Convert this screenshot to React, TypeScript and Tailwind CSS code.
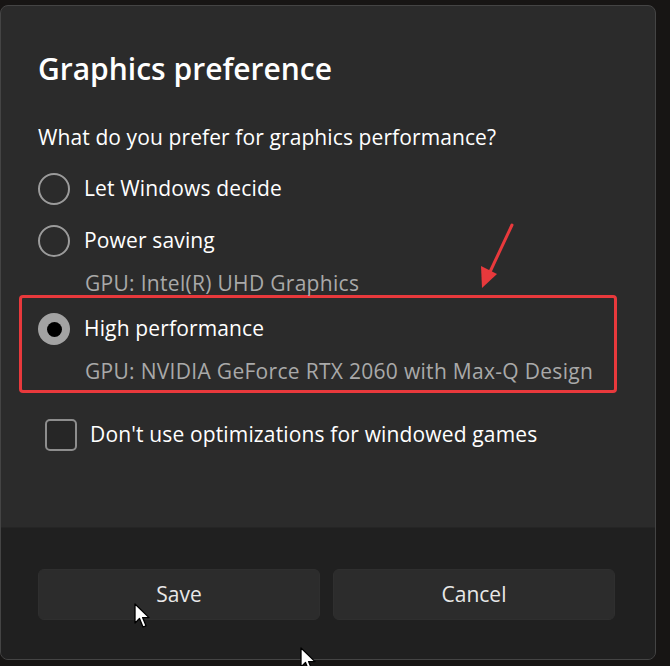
import type { ReactNode } from "react";

const font = { fontFamily: '"Open Sans", "Noto Sans", "Liberation Sans", sans-serif' };

function Radio({ checked = false }: { checked?: boolean }) {
  if (checked) {
    return (
      <span className="flex h-[32px] w-[32px] shrink-0 items-center justify-center rounded-full bg-[#a3a3a3]">
        <span className="h-[15px] w-[15px] rounded-full bg-black" />
      </span>
    );
  }
  return <span className="h-[32px] w-[32px] shrink-0 rounded-full border-2 border-[#9b9b9b]" />;
}

function Option({ label, checked, children }: { label: string; checked?: boolean; children?: ReactNode }) {
  return (
    <div>
      <div className="flex h-[40px] items-center gap-[14px]">
        <Radio checked={checked} />
        <span className="text-[21px] tracking-[0.15px] text-white">{label}</span>
      </div>
      {children}
    </div>
  );
}

function Cursor({ className }: { className: string }) {
  return (
    <svg className={className} width="18" height="26" viewBox="0 0 18 26">
      <path d="M1 1 L1 20 L5.5 15.5 L9 24 L12 22.8 L8.6 14.6 L15 14.6 Z" fill="#fff" stroke="#000" strokeWidth="1.3" strokeLinejoin="round" />
    </svg>
  );
}

export default function App() {
  return (
    <div className="relative h-[666px] w-[670px] overflow-hidden bg-[#171514] pt-[5px]" style={font}>
      <div className="flex h-[655px] w-[656px] flex-col overflow-hidden rounded-[8px] border border-[#444] bg-[#2b2b2b]">
        <div className="pl-[37px] pr-[38px] pt-[45px]">
          <h1 className="h-[36px] text-[30px] font-semibold leading-[36px] text-white">Graphics preference</h1>

          <p className="mt-[36px] h-[28px] text-[21px] leading-[28px] tracking-[0.1px] text-white">
            What do you prefer for graphics performance?
          </p>

          <div className="mt-[18px] flex flex-col gap-[12px]">
            <Option label="Let Windows decide" />
            <Option label="Power saving">
              <p className="ml-[47px] mt-[10px] h-[24px] text-[21px] leading-[24px] tracking-[0.3px] text-[#a9a9a9]">
                GPU: Intel(R) UHD Graphics
              </p>
            </Option>
          </div>

          <div className="ml-[-19px] mt-0 w-[598px] rounded-[4px] border-[3px] border-[#e8393c] pb-[7px] pl-[16px] pt-[11px]">
            <Option label="High performance" checked>
              <p className="ml-[47px] mt-[10px] h-[24px] text-[21px] leading-[24px] tracking-[0.3px] text-[#a9a9a9]">
                GPU: NVIDIA GeForce RTX 2060 with Max-Q Design
              </p>
            </Option>
          </div>

          <div className="mt-[26px] flex h-[32px] items-center gap-[13px] pl-[7px]">
            <span className="h-[32px] w-[32px] shrink-0 rounded-[5px] border-2 border-[#8d8d8d] bg-[#262626]" />
            <span className="text-[21px] tracking-[0.15px] text-white">Don't use optimizations for windowed games</span>
          </div>
        </div>

        <div className="mt-auto flex h-[132px] gap-[13px] border-t border-[#252525] bg-[#202020] pl-[37px] pt-[41px]">
          <button className="h-[51px] w-[282px] rounded-[6px] border border-[#2f2f2f] bg-[#2c2c2c] text-[21px] text-[#e8e8e8]">
            Save
          </button>
          <button className="h-[51px] w-[282px] rounded-[6px] border border-[#2f2f2f] bg-[#2c2c2c] text-[21px] text-[#e8e8e8]">
            Cancel
          </button>
        </div>
      </div>

      <svg className="absolute left-[470px] top-[220px]" width="50" height="72" viewBox="0 0 50 72">
        <line x1="42" y1="5" x2="19" y2="54" stroke="#e8393c" strokeWidth="3" strokeLinecap="round" />
        <path d="M12 68 L11 46 L27 54 Z" fill="#e8393c" />
      </svg>

      <Cursor className="absolute left-[134px] top-[603px]" />
      <Cursor className="absolute left-[300px] top-[647px]" />
    </div>
  );
}
